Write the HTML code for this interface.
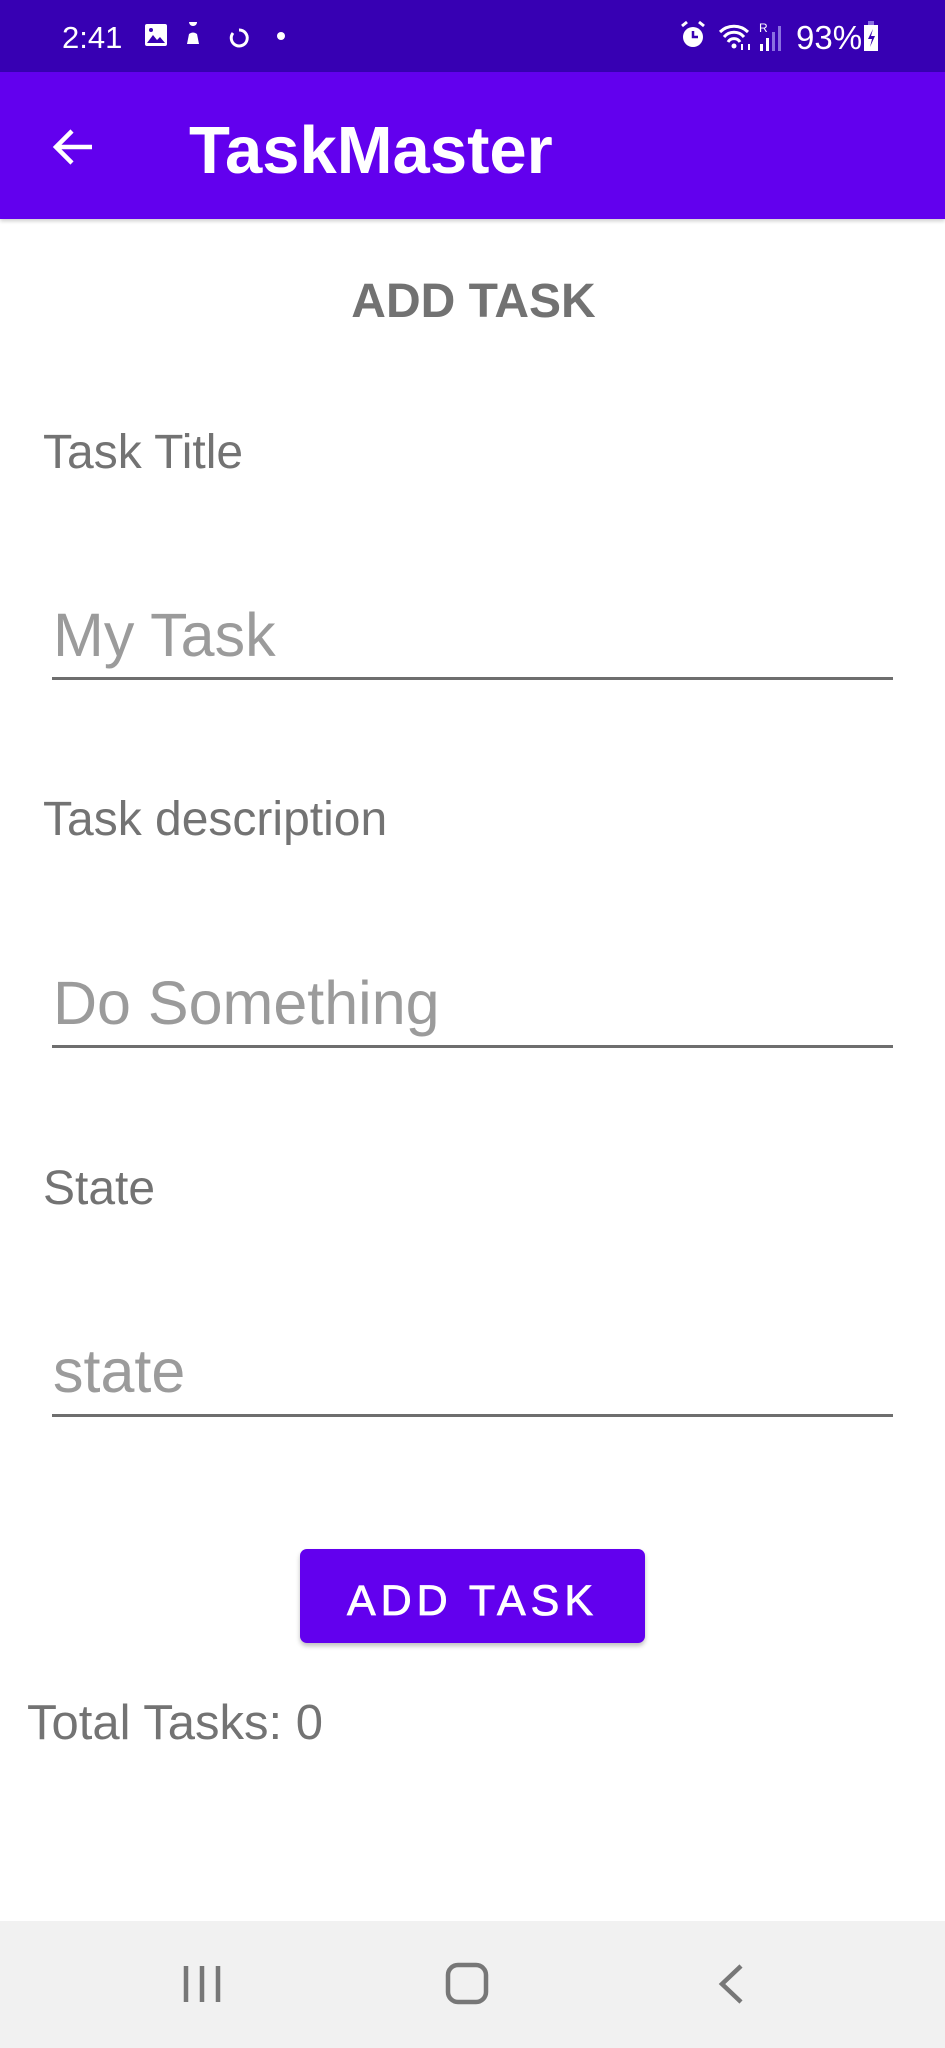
<!DOCTYPE html>
<html><head><meta charset="utf-8"><style>
*{margin:0;padding:0;box-sizing:border-box}
body{width:945px;height:2048px;position:relative;background:#fff;font-family:"Liberation Sans",Arial,sans-serif;overflow:hidden}
.a{position:absolute;line-height:1;white-space:nowrap}
.lbl{left:43px;font-size:48px;color:#737373}
.hint{left:53px;font-size:61px;color:#9b9b9b}
.ul{position:absolute;left:52px;width:841px;height:3px;background:#6e6e6e}
</style></head><body>
<div style="position:absolute;left:0;top:0;width:945px;height:72px;background:#3700b3"></div>
<div class="a" style="left:62px;top:22px;font-size:31px;color:#fff">2:41</div>
<svg style="position:absolute;left:143px;top:22px" width="150" height="28" viewBox="0 0 150 28">
 <rect x="2" y="2" width="22" height="22" rx="2" fill="#fff"/><path d="M4 21 L10 13 L14 18 L17 15 L22 21Z" fill="#3700b3"/><circle cx="8" cy="8" r="2" fill="#3700b3"/>
 <path d="M50 4 a4 4 0 1 1 0.1 0 M46 12 q4 -3 8 0 l2 10 h-12z" fill="#fff"/>
 <path d="M96 8 a8 8 0 1 1 -6 3" stroke="#fff" stroke-width="3" fill="none"/>
 <circle cx="138" cy="14" r="4" fill="#fff"/>
</svg>
<svg style="position:absolute;left:676px;top:18px" width="210" height="36" viewBox="0 0 210 36">
 <circle cx="17" cy="19" r="10" fill="#fff"/><path d="M17 13v6h5" stroke="#3700b3" stroke-width="2.5" fill="none"/><path d="M6 8l5-4M28 8l-5-4" stroke="#fff" stroke-width="3"/>
 <path d="M44 14 a20 20 0 0 1 28 0 M48 19 a13 13 0 0 1 20 0 M52 24 a7 7 0 0 1 12 0" stroke="#fff" stroke-width="3" fill="none"/><circle cx="58" cy="28" r="2.5" fill="#fff"/>
 <path d="M66 26v6M73 32v-6" stroke="#fff" stroke-width="2"/>
 <text x="83" y="14" font-size="12" fill="#fff" font-family="Liberation Sans">R</text>
 <rect x="84" y="26" width="3" height="7" fill="#fff"/><rect x="90" y="20" width="3" height="13" fill="#fff"/><rect x="96" y="14" width="3" height="19" fill="#8a70e0"/><rect x="102" y="8" width="3" height="25" fill="#8a70e0"/>
 <rect x="188" y="7" width="14" height="26" fill="#fff"/><rect x="192" y="3" width="6" height="4" fill="#8a70e0"/><path d="M197 11l-5 10h4l-2 8 5-11h-4z" fill="#3700b3"/>
</svg>
<div class="a" style="left:796px;top:21px;font-size:33px;color:#fff">93%</div>
<div style="position:absolute;left:0;top:72px;width:945px;height:147px;background:#6200ee;box-shadow:0 2px 4px rgba(0,0,0,.2)"></div>
<svg style="position:absolute;left:50px;top:126px" width="46" height="42" viewBox="0 0 46 42"><path d="M42 21H6M22 5L6 21L22 37" stroke="#fff" stroke-width="4.5" fill="none"/></svg>
<div class="a" style="left:189px;top:117px;font-size:67px;font-weight:bold;color:#fff">TaskMaster</div>
<div class="a" style="left:0;width:945px;text-align:center;top:278px;font-size:48px;font-weight:bold;color:#727272;padding-left:2px">ADD TASK</div>
<div class="a lbl" style="top:429px">Task Title</div>
<div class="a hint" style="top:605px">My Task</div>
<div class="ul" style="top:677px"></div>
<div class="a lbl" style="top:796px">Task description</div>
<div class="a hint" style="top:973px">Do Something</div>
<div class="ul" style="top:1045px"></div>
<div class="a lbl" style="top:1165px">State</div>
<div class="a hint" style="top:1341px">state</div>
<div class="ul" style="top:1414px"></div>
<div style="position:absolute;left:300px;top:1549px;width:345px;height:94px;background:#6200ee;border-radius:7px;box-shadow:0 3px 5px rgba(0,0,0,.25)"></div>
<div class="a" style="left:300px;width:345px;text-align:center;top:1580px;font-size:43px;color:#fff;letter-spacing:5px;-webkit-text-stroke:0.8px #fff">ADD TASK</div>
<div class="a" style="left:27px;top:1699px;font-size:49px;color:#737373">Total Tasks: 0</div>
<div style="position:absolute;left:0;top:1921px;width:945px;height:127px;background:#f1f1f1"></div>
<svg style="position:absolute;left:0;top:1921px" width="945" height="127" viewBox="0 0 945 127">
 <path d="M186 45v36M202 45v36M218 45v36" stroke="#777" stroke-width="4.5"/>
 <rect x="448" y="44" width="38" height="37" rx="10" stroke="#777" stroke-width="4.5" fill="none"/>
 <path d="M741 45L722 63L741 81" stroke="#777" stroke-width="4.5" fill="none"/>
</svg>
</body></html>
